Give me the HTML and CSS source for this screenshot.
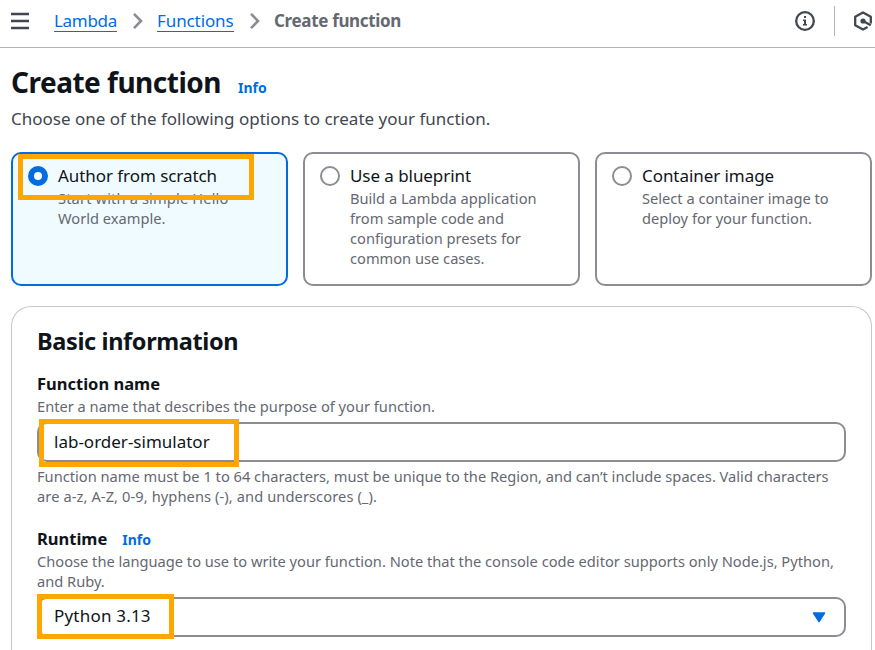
FILE: index.html
```
<!DOCTYPE html>
<html lang="en">
<head>
<meta charset="utf-8">
<title>Create function</title>
<link rel="stylesheet" href="styles.css">
</head>
<body>
<header class="topbar">
  <svg class="menu" width="18" height="18" viewBox="0 0 18 18"><path d="M0 2h18M0 9h18M0 16h18" stroke="#424650" stroke-width="2.4"/></svg>
  <nav class="crumbs">
    <a class="lambda" href="#">Lambda</a>
    <svg class="chevron" width="12" height="18" viewBox="0 0 12 18"><path d="M2 1.8 9 9l-7 7.2" fill="none" stroke="#8c8c94" stroke-width="2.6"/></svg>
    <a class="functions" href="#">Functions</a>
    <svg class="chevron" width="12" height="18" viewBox="0 0 12 18"><path d="M2 1.8 9 9l-7 7.2" fill="none" stroke="#8c8c94" stroke-width="2.6"/></svg>
    <span class="current">Create function</span>
  </nav>
  <div class="tools">
    <svg width="20" height="20" viewBox="0 0 20 20"><circle cx="10" cy="10" r="8.8" fill="none" stroke="#424650" stroke-width="2.3"/><path d="M9 5h2v2H9zM8 8.5h3V13h1v1.5H8V13h1v-3H8z" fill="#424650"/></svg>
    <span class="divider"></span>
    <svg width="20" height="20" viewBox="0 0 20 20"><path d="M17.8 12.5V5.8L10 1.4 2.2 5.8v8.4l7.8 4.4 4.6-2.6" fill="none" stroke="#424650" stroke-width="2.3" stroke-linejoin="round"/><circle cx="10" cy="10" r="2.6" fill="#424650"/><path d="m10 10 7.8 4.2" stroke="#424650" stroke-width="2.4"/></svg>
  </div>
</header>
<main>
  <div class="title"><h1>Create function</h1><a class="info" href="#">Info</a></div>
  <p class="intro">Choose one of the following options to create your function.</p>
  <div class="cards">
    <label class="card selected">
      <span class="radio"></span>
      <span><span class="name">Author from scratch</span><span class="desc"><span class="wide">Start with a simple Hello</span><br>World example.</span></span>
      <span class="mark mark-author"></span>
    </label>
    <label class="card">
      <span class="radio"></span>
      <span><span class="name">Use a blueprint</span><span class="desc">Build a Lambda application<br>from sample code and<br>configuration presets for<br>common use cases.</span></span>
    </label>
    <label class="card">
      <span class="radio"></span>
      <span><span class="name">Container image</span><span class="desc">Select a container image to<br>deploy for your function.</span></span>
    </label>
  </div>
  <section class="panel">
    <h2>Basic information</h2>
    <div class="field">
      <h3>Function name</h3>
      <p class="help">Enter a name that describes the purpose of your function.</p>
      <div class="control input"><span>lab-order-simulator</span><span class="mark mark-name"></span></div>
      <p class="help constraint">Function name must be 1 to 64 characters, must be unique to the Region, and can’t include spaces. Valid characters<br><span class="rule">are a-z, A-Z, 0-9, hyphens (-), and underscores (_).</span></p>
    </div>
    <div class="field">
      <div class="label-row"><h3>Runtime</h3><a class="info" href="#">Info</a></div>
      <p class="help">Choose the language to use to write your function. Note that the console code editor supports only Node.js, Python,<br>and Ruby.</p>
      <div class="control select"><span class="value">Python 3.13</span><svg width="14" height="11" viewBox="0 0 14 11"><path d="M1.5 1h11L7 9.5z" fill="#006ce0" stroke="#006ce0" stroke-width="1.5" stroke-linejoin="round"/></svg><span class="mark mark-runtime"></span></div>
    </div>
  </section>
</main>
</body>
</html>
```
FILE: styles.css
```
* { box-sizing: border-box; }
body {
  margin: 0;
  height: 650px;
  overflow: hidden;
  background: #fff;
  color: #0f141a;
  font: 17px/24px "Noto Sans", sans-serif;
  white-space: nowrap;
}
h1, h2, h3, p { margin: 0; }
a { color: #006ce0; text-decoration: none; }
svg { display: block; flex: none; }

.topbar {
  display: flex;
  align-items: flex-start;
  height: 48px;
  padding: 9px 2px 0 11px;
  border-bottom: 1px solid #b4b4bb;
}
.menu { margin-top: 3px; }
.crumbs { display: flex; margin-left: 25px; }
.crumbs a { height: 23px; border-bottom: 1px solid #006ce0; }
.lambda { width: 63px; letter-spacing: -0.3px; }
.functions { width: 77px; letter-spacing: -0.1px; }
.chevron { margin: 3px 13.5px 0 14.5px; }
.current { color: #656871; font-weight: 700; letter-spacing: -0.33px; }
.tools { display: flex; align-items: flex-start; margin-left: auto; }
.tools svg { margin-top: 2px; }
.divider { width: 1px; height: 30px; margin: -3px 18px 0 19px; background: #b4b4bb; }

main { padding: 16px 3px 0 11px; }
.title { display: flex; align-items: baseline; height: 36px; }
h1 { font-size: 28px; line-height: 36px; letter-spacing: -0.5px; }
.info { font-size: 14px; font-weight: 700; line-height: 20px; }
.title .info { margin-left: 17px; }
.intro { margin-top: 7px; color: #424650; }

.cards { display: grid; grid-template-columns: repeat(3, 1fr); gap: 15px; margin-top: 21px; }
.card {
  position: relative;
  display: flex;
  gap: 10px;
  height: 134px;
  padding: 10px 15px;
  border: 2px solid #8c8c94;
  border-radius: 10px;
}
.card.selected { border-color: #006ce0; background: #f0fbff; }
.radio {
  flex: none;
  width: 20px;
  height: 20px;
  margin-top: 2px;
  border: 2px solid #8c8c94;
  border-radius: 50%;
  background: #fff;
}
.selected .radio { border: 6px solid #006ce0; }
.name, .desc { display: block; }
.name { letter-spacing: -0.06px; }
.desc, .help { color: #656871; font-size: 14.65px; line-height: 20px; }
.wide { letter-spacing: 0.14px; }

.panel {
  height: 344px;
  margin-top: 20px;
  padding: 19px 25px 0;
  border: 1px solid #c6c6cd;
  border-bottom: 0;
  border-radius: 20px 20px 0 0;
}
h2 { font-size: 23.5px; line-height: 30px; letter-spacing: -0.37px; }
h3 { font-size: 16.5px; line-height: 24px; }
.field { margin-top: 16px; }
.field + .field { margin-top: 21px; }
.label-row { display: flex; align-items: baseline; gap: 15px; height: 24px; }
.control {
  position: relative;
  display: flex;
  align-items: center;
  height: 40px;
  margin-top: 6px;
  padding: 0 18px 0 15px;
  border: 2px solid #8c8c94;
  border-radius: 10px;
}
.select { justify-content: space-between; padding-bottom: 3px; }
.select svg { margin-top: 3px; }
.value { letter-spacing: 0.2px; }
.constraint { margin-top: 4px; }
.rule { letter-spacing: 0.09px; }

/* Highlight frames laid over the highlighted values */
.mark { position: absolute; border: 5px solid #ffa700; }
.mark-author { left: 5px; top: 0; width: 236px; height: 46px; }
.mark-name { left: 0; top: -5px; width: 200px; height: 48px; }
.mark-runtime { left: -2px; top: -5px; width: 137px; height: 45px; }
```
